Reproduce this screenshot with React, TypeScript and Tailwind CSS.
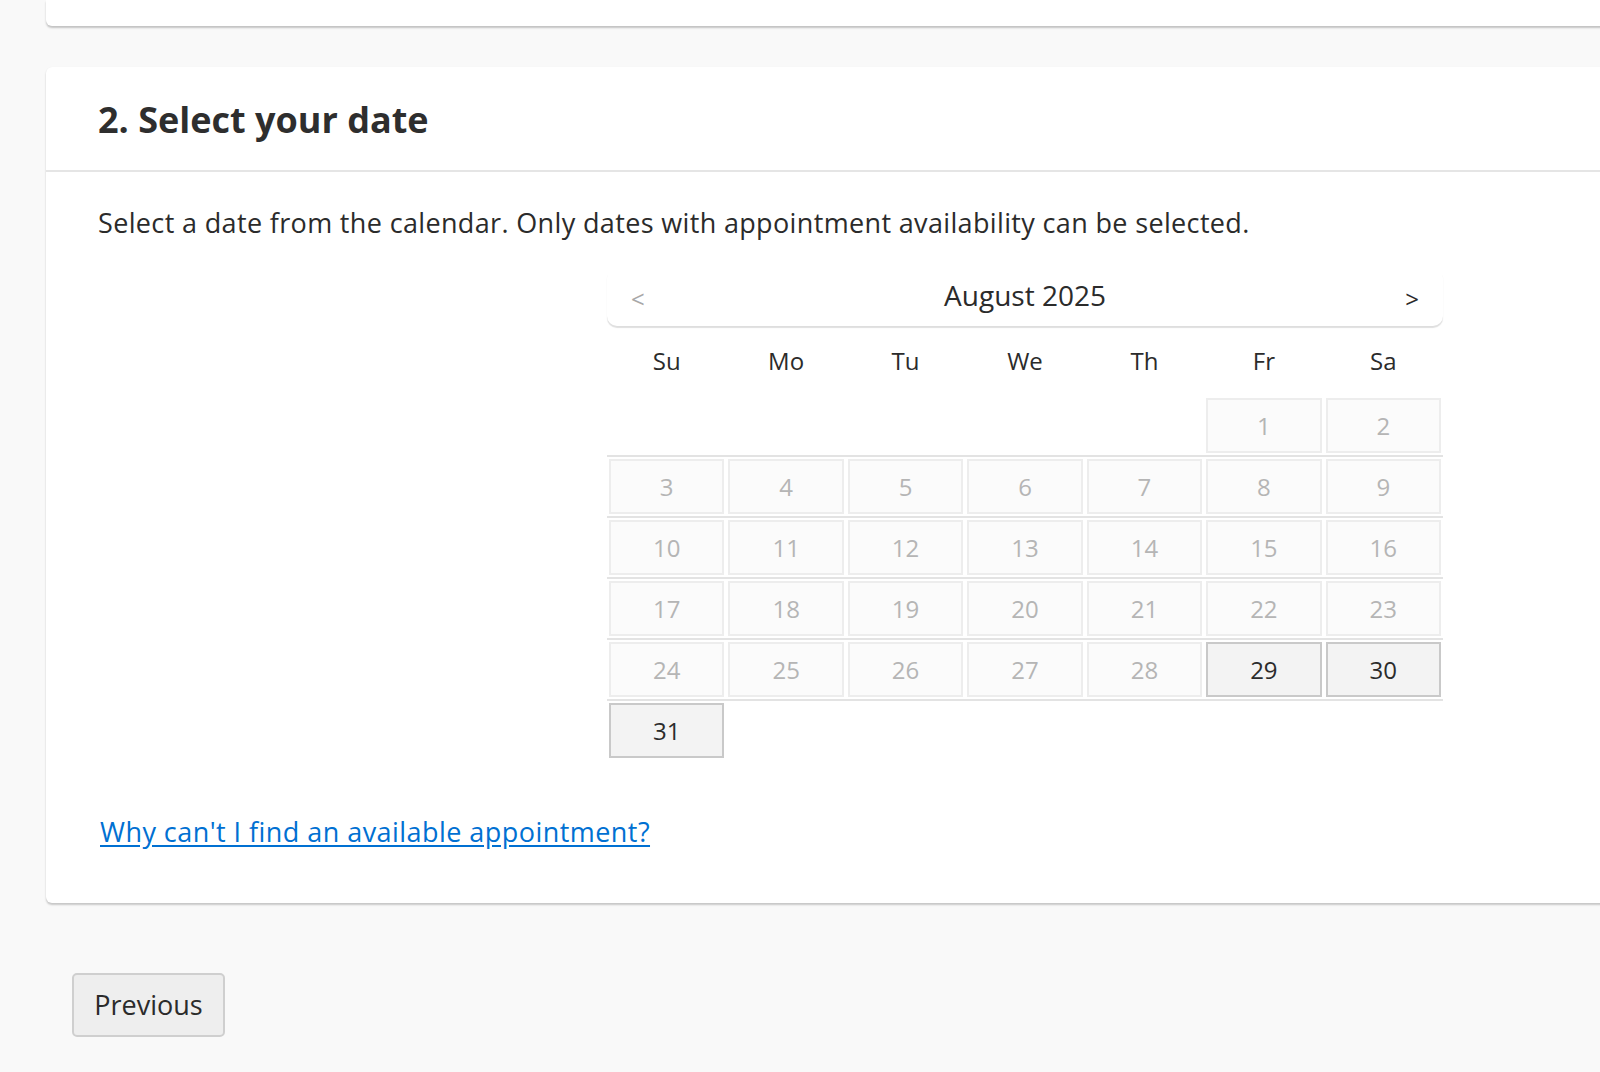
const DAYS = ["Su", "Mo", "Tu", "We", "Th", "Fr", "Sa"];

// August 2025 starts on a Friday; only the last three days can be picked
const WEEKS: (number | null)[][] = [
  [null, null, null, null, null, 1, 2],
  [3, 4, 5, 6, 7, 8, 9],
  [10, 11, 12, 13, 14, 15, 16],
  [17, 18, 19, 20, 21, 22, 23],
  [24, 25, 26, 27, 28, 29, 30],
  [31, null, null, null, null, null, null],
];
const AVAILABLE = new Set([29, 30, 31]);

function DayCell({ day }: { day: number | null }) {
  if (day === null) return <div className="px-[2px] py-[2px]"><div className="h-[55px]" /></div>;
  const open = AVAILABLE.has(day);
  return (
    <div className="px-[2px] py-[2px]">
      <button
        type="button"
        className={`flex h-[55px] w-full items-center justify-center border-2 text-[24px] ${
          open
            ? "border-[#c9c9c9] bg-[#f3f3f3] text-[#2b2b2b]"
            : "border-[#ededed] bg-[#fbfbfb] text-[#b5b5b5]"
        }`}
      >
        {day}
      </button>
    </div>
  );
}

function Calendar() {
  return (
    <div className="ml-[509px] mt-[27px] w-[836px]">
      <div className="flex h-[58px] items-center justify-between rounded-[10px] bg-white px-[24px] pb-[4px] shadow-[0_2px_1px_rgba(0,0,0,0.13)]">
        <span className="pt-[8px] text-[24px] text-[#a8a8a8]">&lt;</span>
        <span className="text-[28px] text-[#2b2b2b]">August 2025</span>
        <span className="pt-[8px] text-[24px] text-[#2b2b2b]">&gt;</span>
      </div>
      <div className="grid h-[70px] grid-cols-7 items-center">
        {DAYS.map((d) => (
          <div key={d} className="text-center text-[24px] text-[#2b2b2b]">
            {d}
          </div>
        ))}
      </div>
      {WEEKS.map((week, i) => (
        <div
          key={i}
          className={`grid grid-cols-7 ${i < WEEKS.length - 1 ? "border-b-2 border-[#e3e3e3]" : ""}`}
        >
          {week.map((d, j) => (
            <DayCell key={j} day={d} />
          ))}
        </div>
      ))}
    </div>
  );
}

export default function App() {
  return (
    <div className="h-[1072px] w-[1600px] overflow-hidden bg-[#f9f9f9] font-['Open_Sans',sans-serif]">
      <div className="-mr-4 ml-[46px] h-[26px] rounded-bl-[6px] bg-white shadow-[0_2px_2px_rgba(0,0,0,0.22)]" />

      <section className="-mr-4 ml-[46px] mt-[41px] rounded-l-[6px] bg-white shadow-[0_2px_2px_rgba(0,0,0,0.2),0_0_1px_rgba(0,0,0,0.06)]">
        <header className="flex h-[105px] items-center border-b-2 border-[#e5e5e5] px-[52px] pt-[3px]">
          <h2 className="text-[36px] font-bold text-[#2e2e2e]">2. Select your date</h2>
        </header>
        <div className="px-[52px] pb-[53px] pt-[33px]">
          <p className="text-[27px] leading-[36px] tracking-[0.35px] text-[#2b2b2b]">
            Select a date from the calendar. Only dates with appointment availability can be
            selected.
          </p>
          <Calendar />
          <a
            href="#"
            className="ml-[2px] mt-[54px] inline-block text-[27px] leading-[36px] tracking-[0.45px] text-[#0070d2] underline underline-offset-[3px]"
          >
            Why can&apos;t I find an available appointment?
          </a>
        </div>
      </section>

      <button
        type="button"
        className="ml-[72px] mt-[70px] h-[64px] w-[153px] rounded-[5px] border-2 border-[#cfcfcf] bg-[#eeeeee] text-[27px] text-[#2b2b2b]"
      >
        Previous
      </button>
    </div>
  );
}
